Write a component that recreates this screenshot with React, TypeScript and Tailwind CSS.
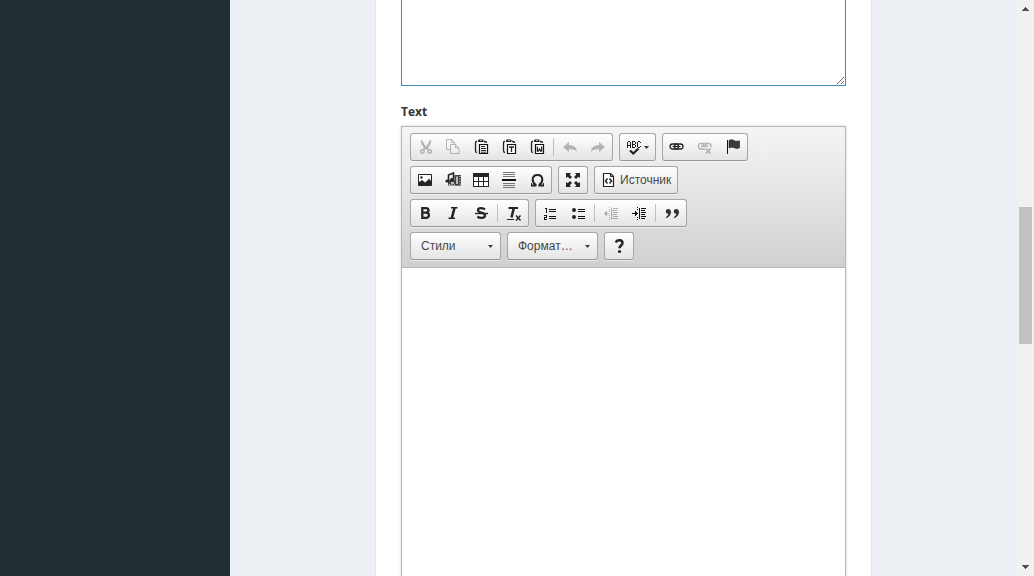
import type { ReactNode } from 'react';

function Icon({ children, crisp = false }: { children: ReactNode; crisp?: boolean }) {
  return (
    <svg
      className="size-4 shrink-0"
      viewBox="0 0 16 16"
      fill="none"
      stroke="none"
      aria-hidden="true"
      shapeRendering={crisp ? 'crispEdges' : 'auto'}
    >
      {children}
    </svg>
  );
}

const ink = '#242424';

const CutIcon = () => (
  <Icon>
    <path d="M3.600 1.500 5 1l4.700 8.300-1.800 1.200L4.400 5z" fill={ink} />
    <path d="M14.400 1.500 13 1 8.300 9.300l1.800 1.200L13.600 5z" fill={ink} />
    <ellipse cx="5.400" cy="12.500" rx="1.800" ry="1.800" stroke={ink} strokeWidth="1.400" />
    <ellipse cx="12.600" cy="12.500" rx="1.800" ry="1.800" stroke={ink} strokeWidth="1.400" />
    <path d="m6.500 10.500 2-1.500h1l2 1.500" stroke={ink} strokeWidth="1.600" />
  </Icon>
);

const CopyIcon = () => (
  <Icon>
    <path d="M5 10.500H1.500V.5h5l3 3V5M6.500.5v3h3" stroke={ink} />
    <path d="M5.500 5.500h5l3.500 3.500v5.500H5.500zM10.500 5.500v3.500H14" stroke={ink} />
  </Icon>
);

function Clipboard({ children }: { children: ReactNode }) {
  return (
    <Icon>
      <path d="M4 2.500h-.5q-1 0-1 1v8q0 2 1.500 2M11 2.500h1q1.500 0 1.500 1.500" stroke={ink} strokeWidth="1.300" />
      <path d="M5 3V1.500q0-1 1-1h3.500q1 0 1 1V3z" fill={ink} />
      <path d="M7 1h2v1H7z" fill="#aaa" />
      <path d="M6.500 5.500h8v9h-8z" fill="#fff" stroke="#111" strokeWidth="1.200" />
      {children}
    </Icon>
  );
}

const PasteIcon = () => (
  <Clipboard>
    <path d="M8 7.500h4M8 9.500h5M8 11.500h5M8 13.200h5" stroke={ink} />
  </Clipboard>
);
const PasteTextIcon = () => (
  <Clipboard>
    <path d="M8 8h5M10.500 8v5" stroke={ink} strokeWidth="1.300" />
  </Clipboard>
);
const PasteWordIcon = () => (
  <Clipboard>
    <path d="M8.400 7.500v4.500h1l1.100-2 1.100 2h1V7.500" stroke={ink} strokeWidth="1.300" />
  </Clipboard>
);

const UndoIcon = () => (
  <Icon>
    <path d="M1 8 7 3v3c4.500 0 7.500 2 8 7-1.500-2.200-4-3-8-3v3z" fill={ink} />
  </Icon>
);
const RedoIcon = () => (
  <Icon>
    <path d="M15 8 9 3v3c-4.500 0-7.500 2-8 7 1.500-2.200 4-3 8-3v3z" fill={ink} />
  </Icon>
);

const SpellIcon = () => (
  <Icon>
    <path
      d="M2 2h2v1H2zM1 3h1v6H1zM4 3h1v6H4zM2 6h2v1H2zM6 2h1v7H6zM7 2h2v1H7zM9 3h1v2H9zM7 5h2v1H7zM9 6h1v2H9zM7 8h2v1H7zM12 2h2v1h-2zM11 3h1v5h-1zM14 3h1v1h-1zM12 8h2v1h-2zM14 7h1v1h-1z"
      fill="#1c1c1c"
    />
    <path d="m4 11.500 3.300 3L12.500 9.500" stroke={ink} strokeWidth="2.200" />
  </Icon>
);

const LinkIcon = () => (
  <Icon>
    <rect x="1" y="5" width="8.500" height="5" rx="2.500" stroke={ink} strokeWidth="1.300" />
    <rect x="5.500" y="5" width="8.500" height="5" rx="2.500" stroke={ink} strokeWidth="1.300" />
    <path d="M3.500 7.500h8" stroke={ink} />
  </Icon>
);
const UnlinkIcon = () => (
  <Icon>
    <path d="M8 10H4Q1.500 10 1.500 7.200T4 4.500h2.500q2.500 0 2.500 2.500M4 7.200h7M6 7.500q.5-3 3-3h2.500Q14 4.500 14 7.200v1" stroke={ink} strokeWidth="1.400" />
    <path d="m9 9.500 4.500 5M13.500 9.500l-4.500 5" stroke={ink} strokeWidth="1.700" />
  </Icon>
);
const FlagIcon = () => (
  <Icon>
    <path d="M2 1h1v14H2z" fill="#111" />
    <path d="M4 1.500c2-1.300 4-.7 5.500.2 1.500.8 3 .7 5 .1v7c-2 .9-3.700.8-5.200 0C7.800 8 6 8 4 9z" fill="#3b3b3b" stroke="#222" strokeWidth=".6" />
  </Icon>
);

const ImageIcon = () => (
  <Icon>
    <path d="M1.500 2.500h13v11h-13z" fill="#fff" stroke={ink} />
    <path d="M2 12v-2l3-2 3 2.500L11 8l1-1.500L14 9v4H2z" fill={ink} />
    <circle cx="4.500" cy="5.500" r="1.200" fill={ink} />
  </Icon>
);
const MediaIcon = () => (
  <Icon>
    <path d="M3 8h12.500v5.500H3z" fill="#444" />
    <path d="M9.500 3H16v10.500H9.500z" fill="#444" />
    <path d="M11 4.500h2V12h-2zM6 10h3v2H6z" fill="#bbb" />
    <path d="M14.500 4h1v1h-1zM14.500 6.500h1v1h-1zM14.500 9h1v1h-1zM14.500 11.500h1v1h-1zM4 12h1v1H4zM6.500 12.500h1v1h-1zM9 12.500h1v1H9z" fill="#fff" />
    <path d="M3.500 8.500V3l5-2v6" stroke="#222" strokeWidth="1.600" />
    <ellipse cx="2.200" cy="9" rx="1.900" ry="1.600" fill="#222" />
    <ellipse cx="7" cy="7.500" rx="1.900" ry="1.600" fill="#222" />
  </Icon>
);
const TableIcon = () => (
  <Icon crisp>
    <path d="M0 1h16v14H0z" fill={ink} />
    <path d="M1 5h4v4H1zM6 5h4v4H6zM11 5h4v4h-4zM1 10h4v4H1zM6 10h4v4H6zM11 10h4v4h-4z" fill="#fff" />
  </Icon>
);
const RuleIcon = () => (
  <Icon crisp>
    <path d="M2 0h12v1H2zM2 2h12v1H2zM2 4h12v1H2zM2 11h12v1H2zM2 13h12v1H2zM2 15h12v1H2z" fill="#777" />
    <path d="M1 7h14v2H1z" fill="#111" />
  </Icon>
);
const OmegaIcon = () => (
  <Icon>
    <path d="M2 13.500h4.500v-1C4.400 11.300 3.700 9.700 3.700 7.600 3.700 4.800 5.600 3 8.500 3s4.800 1.800 4.800 4.600c0 2.100-.7 3.700-2.800 4.900v1H15" stroke={ink} strokeWidth="2" />
    <path d="M2.500 14v-3M14.500 14v-3" stroke={ink} />
  </Icon>
);
const MaximizeIcon = () => (
  <Icon>
    <path d="M1 1h5L4.700 2.700 7 5 5 7 2.700 4.700 1 6zM15 1h-5l1.300 1.700L9 5l2 2 2.300-2.300L15 6zM1 15h5l-1.300-1.700L7 11 5 9l-2.300 2.300L1 10zM15 15h-5l1.300-1.700L9 11l2-2 2.300 2.300L15 10z" fill={ink} />
  </Icon>
);
const SourceIcon = () => (
  <Icon>
    <path d="M2.500 1.500h7l3 3v10h-10z" fill="#fff" stroke={ink} strokeWidth="1.200" strokeLinejoin="round" />
    <path d="M9.500 1.500v3h3" stroke={ink} />
    <path d="M6.500 6.500 4.500 9l2 2.500M8.500 6.500 10.500 9l-2 2.500" stroke={ink} strokeWidth="1.500" />
  </Icon>
);

const BoldIcon = () => (
  <Icon>
    <path d="M5.300 3.200h3.500q2.700 0 2.700 2.200T8.800 7.600H5.300zm0 4.400H9q2.900 0 2.900 2.600T9 12.800H5.300z" stroke={ink} strokeWidth="2.300" />
  </Icon>
);
const ItalicIcon = () => (
  <Icon>
    <path d="M6 2.800h6.500M3.500 13.200H10" stroke={ink} strokeWidth="1.500" />
    <path d="M9.500 3 6.800 13" stroke={ink} strokeWidth="2.600" />
  </Icon>
);
const StrikeIcon = () => (
  <Icon>
    <path d="M12 4.500C10.500 3 5 2 5 5.200c0 3 7 2 7 5.300 0 3.200-6 3-7.500 1" stroke={ink} strokeWidth="2.300" />
    <path d="M2 8.500h13" stroke={ink} strokeWidth="1.400" />
  </Icon>
);
const ClearFormatIcon = () => (
  <Icon>
    <path d="M2.500 3H12" stroke={ink} strokeWidth="2" />
    <path d="M7.800 3 5.500 12.500" stroke={ink} strokeWidth="2.500" />
    <path d="M1 14.500h7" stroke={ink} />
    <path d="m10 10.500 4.500 5M14.500 10.500l-4.500 5" stroke={ink} strokeWidth="1.500" />
  </Icon>
);
const NumberedIcon = () => (
  <Icon crisp>
    <path d="M3 3h2v5H4V4H3zM2 10h3v3H3v1h2v1H2v-3h2v-1H2zM7 4h7v1H7zM7 6h7v1H7zM7 11h7v1H7zM7 13h7v1H7z" fill="#111" />
  </Icon>
);
const BulletedIcon = () => (
  <Icon>
    <circle cx="4" cy="5" r="2" fill={ink} />
    <circle cx="4" cy="12" r="2" fill={ink} />
    <path d="M8 4h7v1H8zM8 6h7v1H8zM8 11h7v1H8zM8 13h7v1H8z" fill="#111" />
  </Icon>
);
const OutdentIcon = () => (
  <Icon crisp>
    <path d="M10 3h5v1h-5zM9 5h5v1H9zM10 7h5v1h-5zM9 9h5v1H9zM10 11h5v1h-5zM9 13h6v1H9zM8 3h1v11H8zM6 2h1v1H6zM6 4h1v1H6zM6 6h1v1H6zM6 10h1v1H6zM6 12h1v1H6zM6 14h1v1H6z" fill="#111" />
    <path d="M1 8h5v1H1zM2 7h1v3H2zM3 6h1v5H3z" fill="#111" />
  </Icon>
);
const IndentIcon = () => (
  <Icon crisp>
    <path d="M10 3h5v1h-5zM10 5h4v1h-4zM10 7h5v1h-5zM10 9h4v1h-4zM10 11h5v1h-5zM10 13h4v1h-4zM8 3h1v11H8zM6 2h1v1H6zM6 4h1v1H6zM6 12h1v1H6zM6 14h1v1H6z" fill="#111" />
    <path d="M1 8h6v1H1zM4 6h1v5H4zM5 7h1v3H5z" fill="#111" />
  </Icon>
);
const QuoteIcon = () => (
  <Icon>
    <path d="M4 4a2.400 2.400 0 1 0 .3 4.800C4 10.500 3 11.500 1.800 12.300l.6.9C5.400 12 7 9.600 7 7 7 5 5.700 4 4 4zM12 4a2.400 2.400 0 1 0 .3 4.800c-.3 1.700-1.300 2.700-2.500 3.500l.6.9C13.400 12 15 9.600 15 7c0-2-1.300-3-3-3z" fill="#333" />
  </Icon>
);
const HelpIcon = () => (
  <Icon>
    <path d="M4.800 4.500C6.200 1.200 11.500 1.700 11.500 5c0 2.500-3 2.500-3 5.200" stroke={ink} strokeWidth="2.500" />
    <circle cx="8.500" cy="13.500" r="1.600" fill={ink} />
  </Icon>
);

function Caret() {
  return (
    <svg className="h-[3px] w-[5px] shrink-0" viewBox="0 0 5 3" aria-hidden="true">
      <path d="M0 0h5L2.500 3z" fill="#3a3a3a" />
    </svg>
  );
}

function ToolGroup({ children }: { children: ReactNode }) {
  return (
    <div className="flex h-7 items-center rounded-[3px] border border-[#a6a6a6] border-b-[#979797] bg-linear-to-b from-white to-[#e4e4e4] shadow-[0_1px_0_rgba(255,255,255,0.5)]">
      {children}
    </div>
  );
}

function Tool({ label, icon, disabled = false, children }: { label: string; icon: ReactNode; disabled?: boolean; children?: ReactNode }) {
  return (
    <button type="button" aria-label={label} title={label} disabled={disabled} className="flex h-[26px] items-center px-1.5 disabled:opacity-30">
      {icon}
      {children}
    </button>
  );
}

function Separator() {
  return <span className="mx-0.5 h-[18px] w-px bg-[#c0c0c0]" />;
}

function Combo({ label, text }: { label: string; text: string }) {
  return (
    <ToolGroup>
      <label className="relative flex items-center">
        <select aria-label={label} className="h-[26px] w-[89px] appearance-none bg-transparent pl-2.5 text-xs text-[#474747]">
          <option>{text}</option>
        </select>
        <span className="pointer-events-none absolute right-[7px] flex">
          <Caret />
        </span>
      </label>
    </ToolGroup>
  );
}

function Toolbar() {
  return (
    <div className="flex flex-col gap-[5px] border-b border-[#b6b6b6] bg-linear-to-b from-[#f5f5f5] to-[#cfd1cf] px-2 pt-1.5 pb-[7px]">
      <div className="flex gap-1.5">
        <ToolGroup>
          <Tool label="Вырезать" icon={<CutIcon />} disabled />
          <Tool label="Копировать" icon={<CopyIcon />} disabled />
          <Tool label="Вставить" icon={<PasteIcon />} />
          <Tool label="Вставить только текст" icon={<PasteTextIcon />} />
          <Tool label="Вставить из Word" icon={<PasteWordIcon />} />
          <Separator />
          <Tool label="Отменить" icon={<UndoIcon />} disabled />
          <Tool label="Повторить" icon={<RedoIcon />} disabled />
        </ToolGroup>
        <ToolGroup>
          <Tool label="Проверка орфографии" icon={<SpellIcon />}>
            <span className="ml-0.5 flex">
              <Caret />
            </span>
          </Tool>
        </ToolGroup>
        <ToolGroup>
          <Tool label="Ссылка" icon={<LinkIcon />} />
          <Tool label="Убрать ссылку" icon={<UnlinkIcon />} disabled />
          <Tool label="Якорь" icon={<FlagIcon />} />
        </ToolGroup>
      </div>
      <div className="flex gap-1.5">
        <ToolGroup>
          <Tool label="Изображение" icon={<ImageIcon />} />
          <Tool label="Медиа" icon={<MediaIcon />} />
          <Tool label="Таблица" icon={<TableIcon />} />
          <Tool label="Горизонтальная линия" icon={<RuleIcon />} />
          <Tool label="Специальный символ" icon={<OmegaIcon />} />
        </ToolGroup>
        <ToolGroup>
          <Tool label="Развернуть" icon={<MaximizeIcon />} />
        </ToolGroup>
        <ToolGroup>
          <Tool label="Источник" icon={<SourceIcon />}>
            <span className="ml-[3px] text-xs text-[#474747]">Источник</span>
          </Tool>
        </ToolGroup>
      </div>
      <div className="flex gap-1.5">
        <ToolGroup>
          <Tool label="Полужирный" icon={<BoldIcon />} />
          <Tool label="Курсив" icon={<ItalicIcon />} />
          <Tool label="Зачеркнутый" icon={<StrikeIcon />} />
          <Separator />
          <Tool label="Убрать форматирование" icon={<ClearFormatIcon />} />
        </ToolGroup>
        <ToolGroup>
          <Tool label="Нумерованный список" icon={<NumberedIcon />} />
          <Tool label="Маркированный список" icon={<BulletedIcon />} />
          <Separator />
          <Tool label="Уменьшить отступ" icon={<OutdentIcon />} disabled />
          <Tool label="Увеличить отступ" icon={<IndentIcon />} />
          <Separator />
          <Tool label="Цитата" icon={<QuoteIcon />} />
        </ToolGroup>
      </div>
      <div className="flex gap-1.5">
        <Combo label="Стили" text="Стили" />
        <Combo label="Форматирование" text="Формат…" />
        <ToolGroup>
          <Tool label="О редакторе" icon={<HelpIcon />} />
        </ToolGroup>
      </div>
    </div>
  );
}

function ScrollTrack() {
  return (
    <div className="flex w-[17px] shrink-0 flex-col bg-[#f1f1f1] px-0.5" aria-hidden="true">
      <div className="flex h-[17px] items-center justify-center pt-px">
        <svg className="h-1 w-[7px]" viewBox="0 0 7 4" shapeRendering="crispEdges">
          <path d="M3 0h1v1h1v1h1v1h1v1H0V3h1V2h1V1h1z" fill="#505050" />
        </svg>
      </div>
      <div className="flex-[190]" />
      <div className="flex-[137] bg-[#c1c1c1]" />
      <div className="flex-[215]" />
      <div className="flex h-[17px] items-center justify-center pb-0.5">
        <svg className="h-1 w-[7px]" viewBox="0 0 7 4" shapeRendering="crispEdges">
          <path d="M0 0h7v1H6v1H5v1H4v1H3V3H2V2H1V1H0z" fill="#505050" />
        </svg>
      </div>
    </div>
  );
}

export default function App() {
  return (
    <div className="flex h-screen overflow-hidden bg-[#ecf0f5] font-['Liberation_Sans',Arial,sans-serif]">
      <aside className="w-[230px] shrink-0 bg-[#222d32]" />
      <main className="flex min-w-0 flex-1 justify-center">
        <form className="flex w-full max-w-[495px] flex-col bg-white px-[25px] shadow-[0_0_1px_rgba(0,0,0,0.2)]">
          <textarea
            aria-label="Description"
            className="block h-[86px] w-full shrink-0 resize border border-t-0 border-[#3c8dbc] bg-white outline-none"
          />
          <label htmlFor="body" className="mt-[17px] mb-[5px] text-xs leading-[18px] font-bold text-[#333] font-['Open_Sans','Noto_Sans',sans-serif]">
            Text
          </label>
          <div className="flex flex-1 flex-col border border-b-0 border-[#b6b6b6] shadow-[0_0_3px_rgba(0,0,0,0.15)]">
            <Toolbar />
            <textarea id="body" className="block w-full flex-1 resize-none bg-white p-5 text-sm outline-none" />
          </div>
        </form>
      </main>
      <ScrollTrack />
    </div>
  );
}
